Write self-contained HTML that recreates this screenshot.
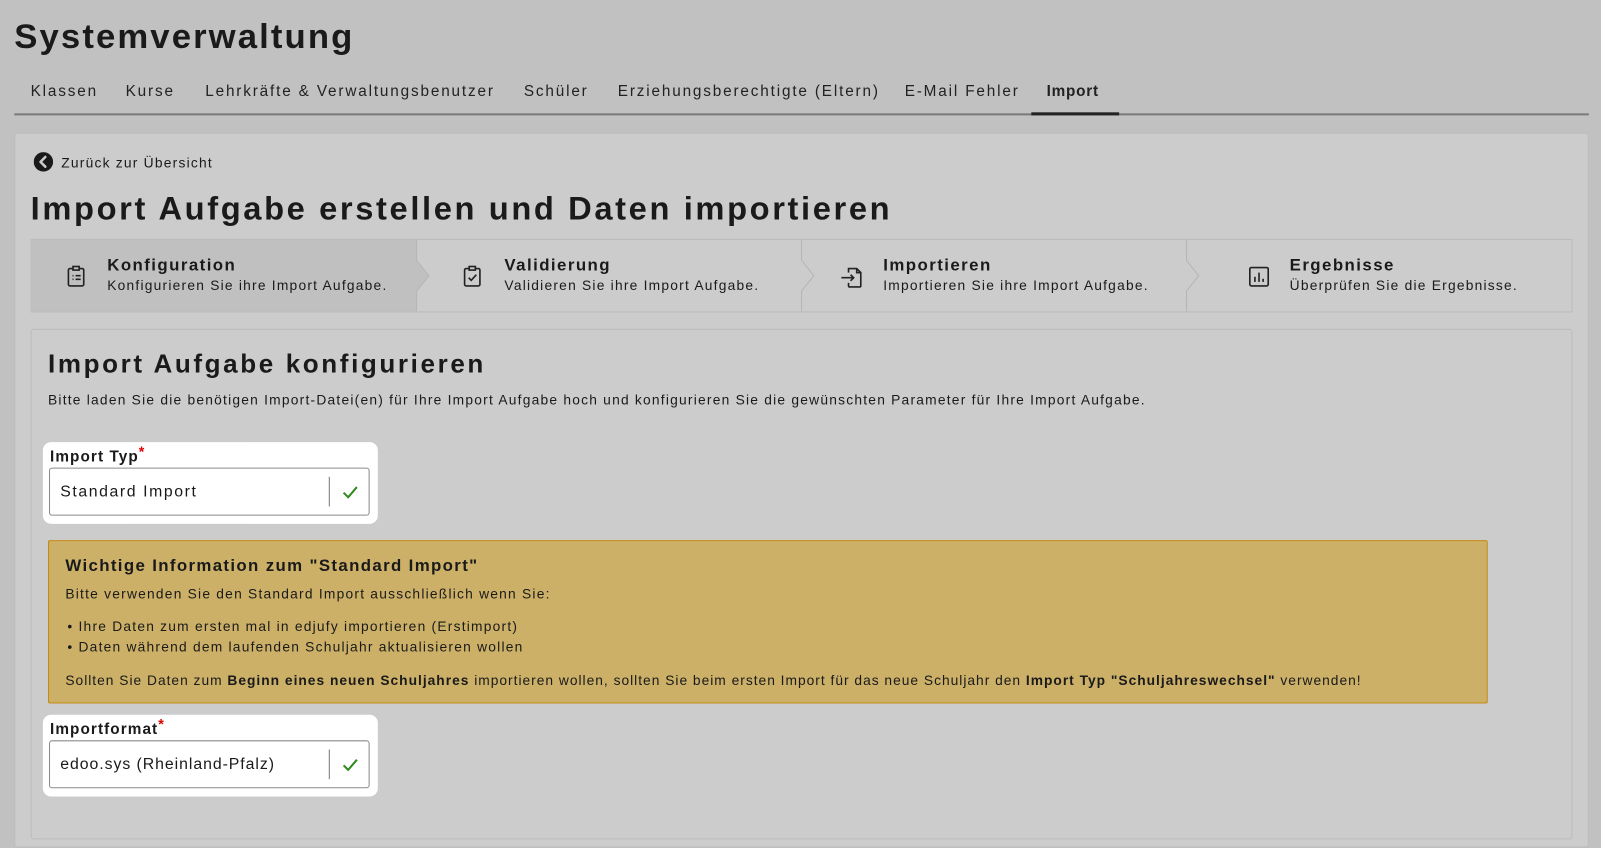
<!DOCTYPE html>
<html><head><meta charset="utf-8"><style>
*{box-sizing:border-box;margin:0;padding:0}
body{width:1601px;height:814px;overflow:hidden;background:#c1c1c1;font-family:"Liberation Sans",sans-serif;color:#1a1a1a;position:relative;letter-spacing:0.075em}
#w{position:absolute;left:0;top:0;width:1568px;height:798px;transform:scale(1.0211);transform-origin:0 0}
.a{position:absolute;white-space:nowrap}
h1{font-size:34px;font-weight:bold;letter-spacing:0.06em}
.tab{font-size:15px;top:81px;color:#222;letter-spacing:0.12em}
.panel{position:absolute;left:14px;top:130px;width:1542px;height:700px;background:#cccccc;border:1px solid #bdbdbd;border-radius:3px}
.steps{position:absolute;left:30px;top:234px;width:1510px;height:72px;border:1px solid #bcbcbc;background:#cccccc}
.st{position:absolute;top:0;height:70px}
.st b{position:absolute;font-size:16.5px;top:16px;white-space:nowrap;letter-spacing:0.085em}
.st span{position:absolute;font-size:13.5px;top:37px;white-space:nowrap}
.card{position:absolute;left:30px;top:322px;width:1510px;height:500px;border:1px solid #bcbcbc;border-radius:3px;background:#cccccc}
.fld{position:absolute;background:#fff;border-radius:8px}
.inp{position:absolute;left:6px;border:1px solid #8a8a8a;border-radius:3px;width:314px;height:47px;background:#fff}
.inp .v{position:absolute;left:10px;top:14px;font-size:15.5px;white-space:nowrap}
.inp .sep{position:absolute;left:273px;top:8px;width:1px;height:29px;background:#777}
</style></head><body><div id="w">
<h1 class="a" style="left:14px;top:17px">Systemverwaltung</h1>
<div class="a tab" style="left:30px">Klassen</div>
<div class="a tab" style="left:123px">Kurse</div>
<div class="a tab" style="left:201px">Lehrkräfte &amp; Verwaltungsbenutzer</div>
<div class="a tab" style="left:513px">Schüler</div>
<div class="a tab" style="left:605px">Erziehungsberechtigte (Eltern)</div>
<div class="a tab" style="left:886px">E-Mail Fehler</div>
<div class="a tab" style="left:1025px;font-weight:bold;letter-spacing:0.05em">Import</div>
<div class="a" style="left:14px;top:111px;width:1542px;height:2px;background:#7a7a7a"></div>
<div class="a" style="left:1010px;top:110px;width:86px;height:3px;background:#222"></div>
<div class="panel"></div>
<svg class="a" style="left:33px;top:149px" width="19" height="19" viewBox="0 0 20 20"><circle cx="10" cy="10" r="10" fill="#1a1a1a"/><path d="M12 5l-5 5 5 5" stroke="#ccc" stroke-width="2.6" fill="none" stroke-linecap="round" stroke-linejoin="round"/></svg>
<div class="a" style="left:60px;top:152px;font-size:13.5px">Zurück zur Übersicht</div>
<div class="a" style="left:30px;top:186px;font-size:32px;font-weight:bold;letter-spacing:0.08em">Import Aufgabe erstellen und Daten importieren</div>
<div class="steps">
 <div class="st" style="left:0;width:377px;background:#c0c0c0"></div>
 <svg class="a" style="left:376px;top:0" width="410" height="70"><path d="M1 0V20L13 35L1 50V70" fill="#c0c0c0" stroke="#b5b5b5"/><path d="M378 0V20L390 35L378 50V70" fill="none" stroke="#b5b5b5"/></svg>
 <svg class="a" style="left:1130px;top:0" width="20" height="70"><path d="M1 0V20L13 35L1 50V70" fill="none" stroke="#b5b5b5"/></svg>
 <svg class="a" style="left:34px;top:25px" width="20" height="22" viewBox="0 0 20 22" fill="none" stroke="#222" stroke-width="1.6"><rect x="2" y="3" width="15" height="17" rx="1.5"/><rect x="6.5" y="1" width="6" height="3.5" fill="#c0c0c0"/><path d="M6 10h1M9 10h5M6 13.5h1M9 13.5h5"/></svg>
 <div class="st" style="left:74px"><b>Konfiguration</b><span>Konfigurieren Sie ihre Import Aufgabe.</span></div>
 <svg class="a" style="left:422px;top:25px" width="20" height="22" viewBox="0 0 20 22" fill="none" stroke="#222" stroke-width="1.6"><rect x="2" y="3" width="15" height="17" rx="1.5"/><rect x="6.5" y="1" width="6" height="3.5" fill="#ccc"/><path d="M6 12l2.5 2.5L13.5 9"/></svg>
 <div class="st" style="left:463px"><b>Validierung</b><span>Validieren Sie ihre Import Aufgabe.</span></div>
 <svg class="a" style="left:792px;top:25px" width="24" height="24" viewBox="0 0 24 24" fill="none" stroke="#222" stroke-width="1.6"><path d="M8 7V3h8l4 4v13a1 1 0 0 1-1 1H9a1 1 0 0 1-1-1v-3M16 3v4h4M1 12h12M10 9l3 3-3 3"/></svg>
 <div class="st" style="left:834px"><b>Importieren</b><span>Importieren Sie ihre Import Aufgabe.</span></div>
 <svg class="a" style="left:1191px;top:25px" width="22" height="22" viewBox="0 0 22 22" fill="none" stroke="#222" stroke-width="1.6"><rect x="2" y="2" width="18" height="18" rx="1.5"/><path d="M7 16v-5M11 16V7M15 16v-3"/></svg>
 <div class="st" style="left:1232px"><b>Ergebnisse</b><span>Überprüfen Sie die Ergebnisse.</span></div>
</div>
<div class="card"></div>
<div class="a" style="left:47px;top:343px;font-size:25.5px;font-weight:bold;letter-spacing:0.1em">Import Aufgabe konfigurieren</div>
<div class="a" style="left:47px;top:384px;font-size:13.5px">Bitte laden Sie die benötigen Import-Datei(en) für Ihre Import Aufgabe hoch und konfigurieren Sie die gewünschten Parameter für Ihre Import Aufgabe.</div>
<div class="fld" style="left:42px;top:433px;width:328px;height:80px">
 <div class="a" style="left:7px;top:6px;font-size:15px;font-weight:bold;letter-spacing:0.07em">Import Typ<span style="color:#d00;font-size:14px;position:relative;top:-5px">*</span></div>
 <div class="inp" style="top:25px"><div class="v" style="letter-spacing:0.1em">Standard Import</div><div class="sep"></div><svg class="a" style="left:286px;top:16px" width="16" height="14"><path d="M1.5 7.5l4.5 4.5L14.5 2" stroke="#2f8a1f" stroke-width="2" fill="none"/></svg></div>
</div>
<div class="a" style="left:47px;top:529px;width:1410px;height:160px;background:#ccb067;border:1px solid #c58a14;border-radius:2px"></div>
<div class="a" style="left:64px;top:545px;font-size:16.5px;font-weight:bold;letter-spacing:0.08em">Wichtige Information zum "Standard Import"</div>
<div class="a" style="left:64px;top:574px;font-size:13.5px">Bitte verwenden Sie den Standard Import ausschließlich wenn Sie:</div>
<div class="a" style="left:66px;top:606px;font-size:13.5px">•&nbsp;Ihre Daten zum ersten mal in edjufy importieren (Erstimport)</div>
<div class="a" style="left:66px;top:626px;font-size:13.5px">•&nbsp;Daten während dem laufenden Schuljahr aktualisieren wollen</div>
<div class="a" style="left:64px;top:659px;font-size:13.5px;letter-spacing:0.072em">Sollten Sie Daten zum <b>Beginn eines neuen Schuljahres</b> importieren wollen, sollten Sie beim ersten Import für das neue Schuljahr den <b>Import Typ "Schuljahreswechsel"</b> verwenden!</div>
<div class="fld" style="left:42px;top:700px;width:328px;height:80px">
 <div class="a" style="left:7px;top:6px;font-size:15px;font-weight:bold;letter-spacing:0.07em">Importformat<span style="color:#d00;font-size:14px;position:relative;top:-5px">*</span></div>
 <div class="inp" style="top:25px"><div class="v" style="letter-spacing:0.06em">edoo.sys (Rheinland-Pfalz)</div><div class="sep"></div><svg class="a" style="left:286px;top:16px" width="16" height="14"><path d="M1.5 7.5l4.5 4.5L14.5 2" stroke="#2f8a1f" stroke-width="2" fill="none"/></svg></div>
</div>
</div></body></html>
